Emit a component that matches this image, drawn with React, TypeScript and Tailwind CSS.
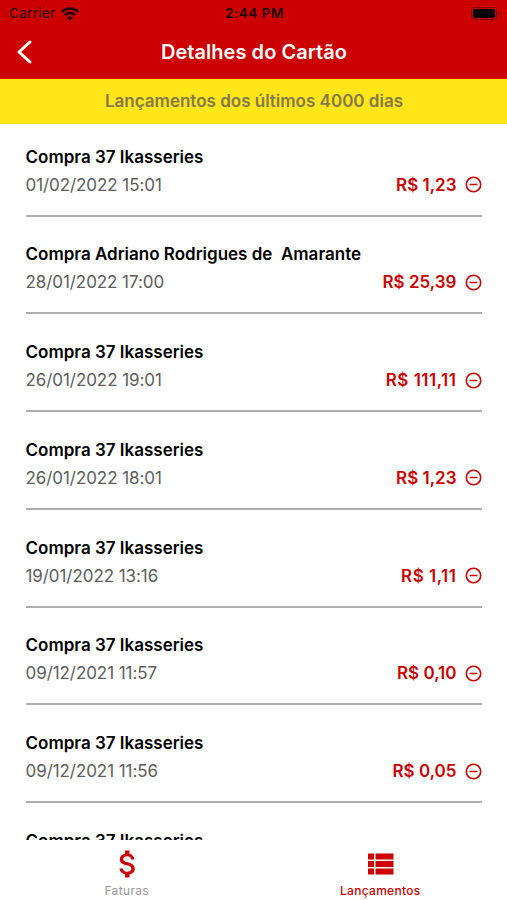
import clsx from "clsx";
import { MdAttachMoney } from "react-icons/md";

type Entry = {
  id: number;
  title: string;
  date: string;
  amount: string;
};

const entries: Entry[] = [
  { id: 1, title: "Compra 37 Ikasseries", date: "01/02/2022 15:01", amount: "R$ 1,23" },
  { id: 2, title: "Compra Adriano Rodrigues de  Amarante", date: "28/01/2022 17:00", amount: "R$ 25,39" },
  { id: 3, title: "Compra 37 Ikasseries", date: "26/01/2022 19:01", amount: "R$ 111,11" },
  { id: 4, title: "Compra 37 Ikasseries", date: "26/01/2022 18:01", amount: "R$ 1,23" },
  { id: 5, title: "Compra 37 Ikasseries", date: "19/01/2022 13:16", amount: "R$ 1,11" },
  { id: 6, title: "Compra 37 Ikasseries", date: "09/12/2021 11:57", amount: "R$ 0,10" },
  { id: 7, title: "Compra 37 Ikasseries", date: "09/12/2021 11:56", amount: "R$ 0,05" },
  { id: 8, title: "Compra 37 Ikasseries", date: "09/12/2021 11:55", amount: "R$ 0,05" },
];

function WifiIcon() {
  return (
    <svg width="18" height="14" viewBox="0 0 18 14" fill="none" stroke="currentColor" strokeWidth="2.5">
      <path d="M0.9 4.9a11.5 11.5 0 0 1 16.2 0" />
      <path d="M3.9 8.2a7.2 7.2 0 0 1 10.2 0" />
      <path d="M9 13.6L6.2 10.9a4 4 0 0 1 5.6 0z" fill="currentColor" stroke="none" />
    </svg>
  );
}

function BatteryIcon() {
  return (
    <svg width="30" height="14" viewBox="0 0 30 14">
      <rect x="1.5" y="0.5" width="25" height="12" rx="3" fill="none" stroke="#000" strokeOpacity="0.35" />
      <rect x="3" y="2" width="22" height="9" rx="1.5" fill="#000" />
      <path d="M28 4.5v4a2.2 2.2 0 0 0 0-4z" fill="#000" fillOpacity="0.4" />
    </svg>
  );
}

function MinusCircleIcon() {
  return (
    <svg width="17" height="17" viewBox="0 0 17 17" fill="none" stroke="currentColor" strokeWidth="1.6" strokeLinecap="round">
      <circle cx="8.5" cy="8.5" r="7.2" />
      <path d="M5.2 8.5h6.6" />
    </svg>
  );
}

function StatusBar() {
  return (
    <div className="grid h-[27px] grid-cols-3 items-center pr-[7px] pl-[9px] text-[#1c0000]">
      <div className="flex items-center gap-[6px]">
        <span className="text-[13.5px] tracking-[0.3px]">Carrier</span>
        <WifiIcon />
      </div>
      <span className="text-center text-[13.5px] font-semibold tracking-[0.5px]">2:44 PM</span>
      <div className="flex justify-end">
        <BatteryIcon />
      </div>
    </div>
  );
}

function Header() {
  return (
    <header className="h-[79px] bg-[#cc0000]">
      <StatusBar />
      <div className="grid h-[50px] grid-cols-[60px_1fr_60px] items-center pl-px text-white">
        <button type="button" aria-label="Voltar" className="pl-[14px]">
          <svg width="18" height="26" viewBox="0 0 18 26" fill="none" stroke="currentColor" strokeWidth="3" strokeLinecap="round" strokeLinejoin="round">
            <path d="M15 3L4 13L15 23" />
          </svg>
        </button>
        <h1 className="text-center text-[20px] font-semibold tracking-[0.05px]">Detalhes do Cartão</h1>
      </div>
    </header>
  );
}

function EntryRow({ entry }: { entry: Entry }) {
  // runs of narrow ones need a little more room
  const loose = entry.amount.includes("11");

  return (
    <li className="h-[74px] shrink-0 border-b-2 border-[#adadad]">
      <p className="text-[17px] leading-7 font-semibold whitespace-pre text-black">{entry.title}</p>
      <div className="flex items-center justify-between">
        <span className="text-[17px] leading-7 tracking-[-0.07px] text-[#5c5c5c]">{entry.date}</span>
        <span className="flex items-center gap-[8.5px] text-[#cc0000]">
          <span className={clsx("text-[17px] leading-7 font-semibold", loose && "tracking-[0.5px]")}>
            {entry.amount}
          </span>
          <MinusCircleIcon />
        </span>
      </div>
    </li>
  );
}

function TabBar() {
  return (
    <nav className="grid h-[60px] grid-cols-2 bg-white">
      <button type="button" className="flex flex-col items-center pt-[6px] text-[#999999]">
        <MdAttachMoney size={36} className="ml-[2px] text-[#cc0000]" />
        <span className="text-[12px] leading-[17px] tracking-[0.35px]">Faturas</span>
      </button>
      <button type="button" className="flex flex-col items-center pt-[6px] text-[#cc0000]">
        <svg width="36" height="36" viewBox="0 0 24 24" fill="currentColor">
          <path d="M4 14h4v-4H4v4zm0 5h4v-4H4v4zM4 9h4V5H4v4zm5 5h12v-4H9v4zm0 5h12v-4H9v4zM9 5v4h12V5H9z" />
        </svg>
        <span className="text-[12px] leading-[17px] font-medium tracking-[0.3px]">Lançamentos</span>
      </button>
    </nav>
  );
}

function App() {
  return (
    <div className="flex h-[900px] w-full flex-col overflow-hidden bg-white font-[Inter,sans-serif]">
      <Header />
      <div className="flex h-[45px] shrink-0 items-center justify-center bg-[#ffe619] pt-px pl-px text-[17px] font-semibold text-[#85794c]">
        Lançamentos dos últimos 4000 dias
      </div>
      <ul className="flex min-h-0 flex-1 flex-col gap-[23.75px] overflow-hidden pr-[25px] pl-[25.5px] pt-[18.5px]">
        {entries.map((entry) => (
          <EntryRow key={entry.id} entry={entry} />
        ))}
      </ul>
      <TabBar />
    </div>
  );
}

export default App;
